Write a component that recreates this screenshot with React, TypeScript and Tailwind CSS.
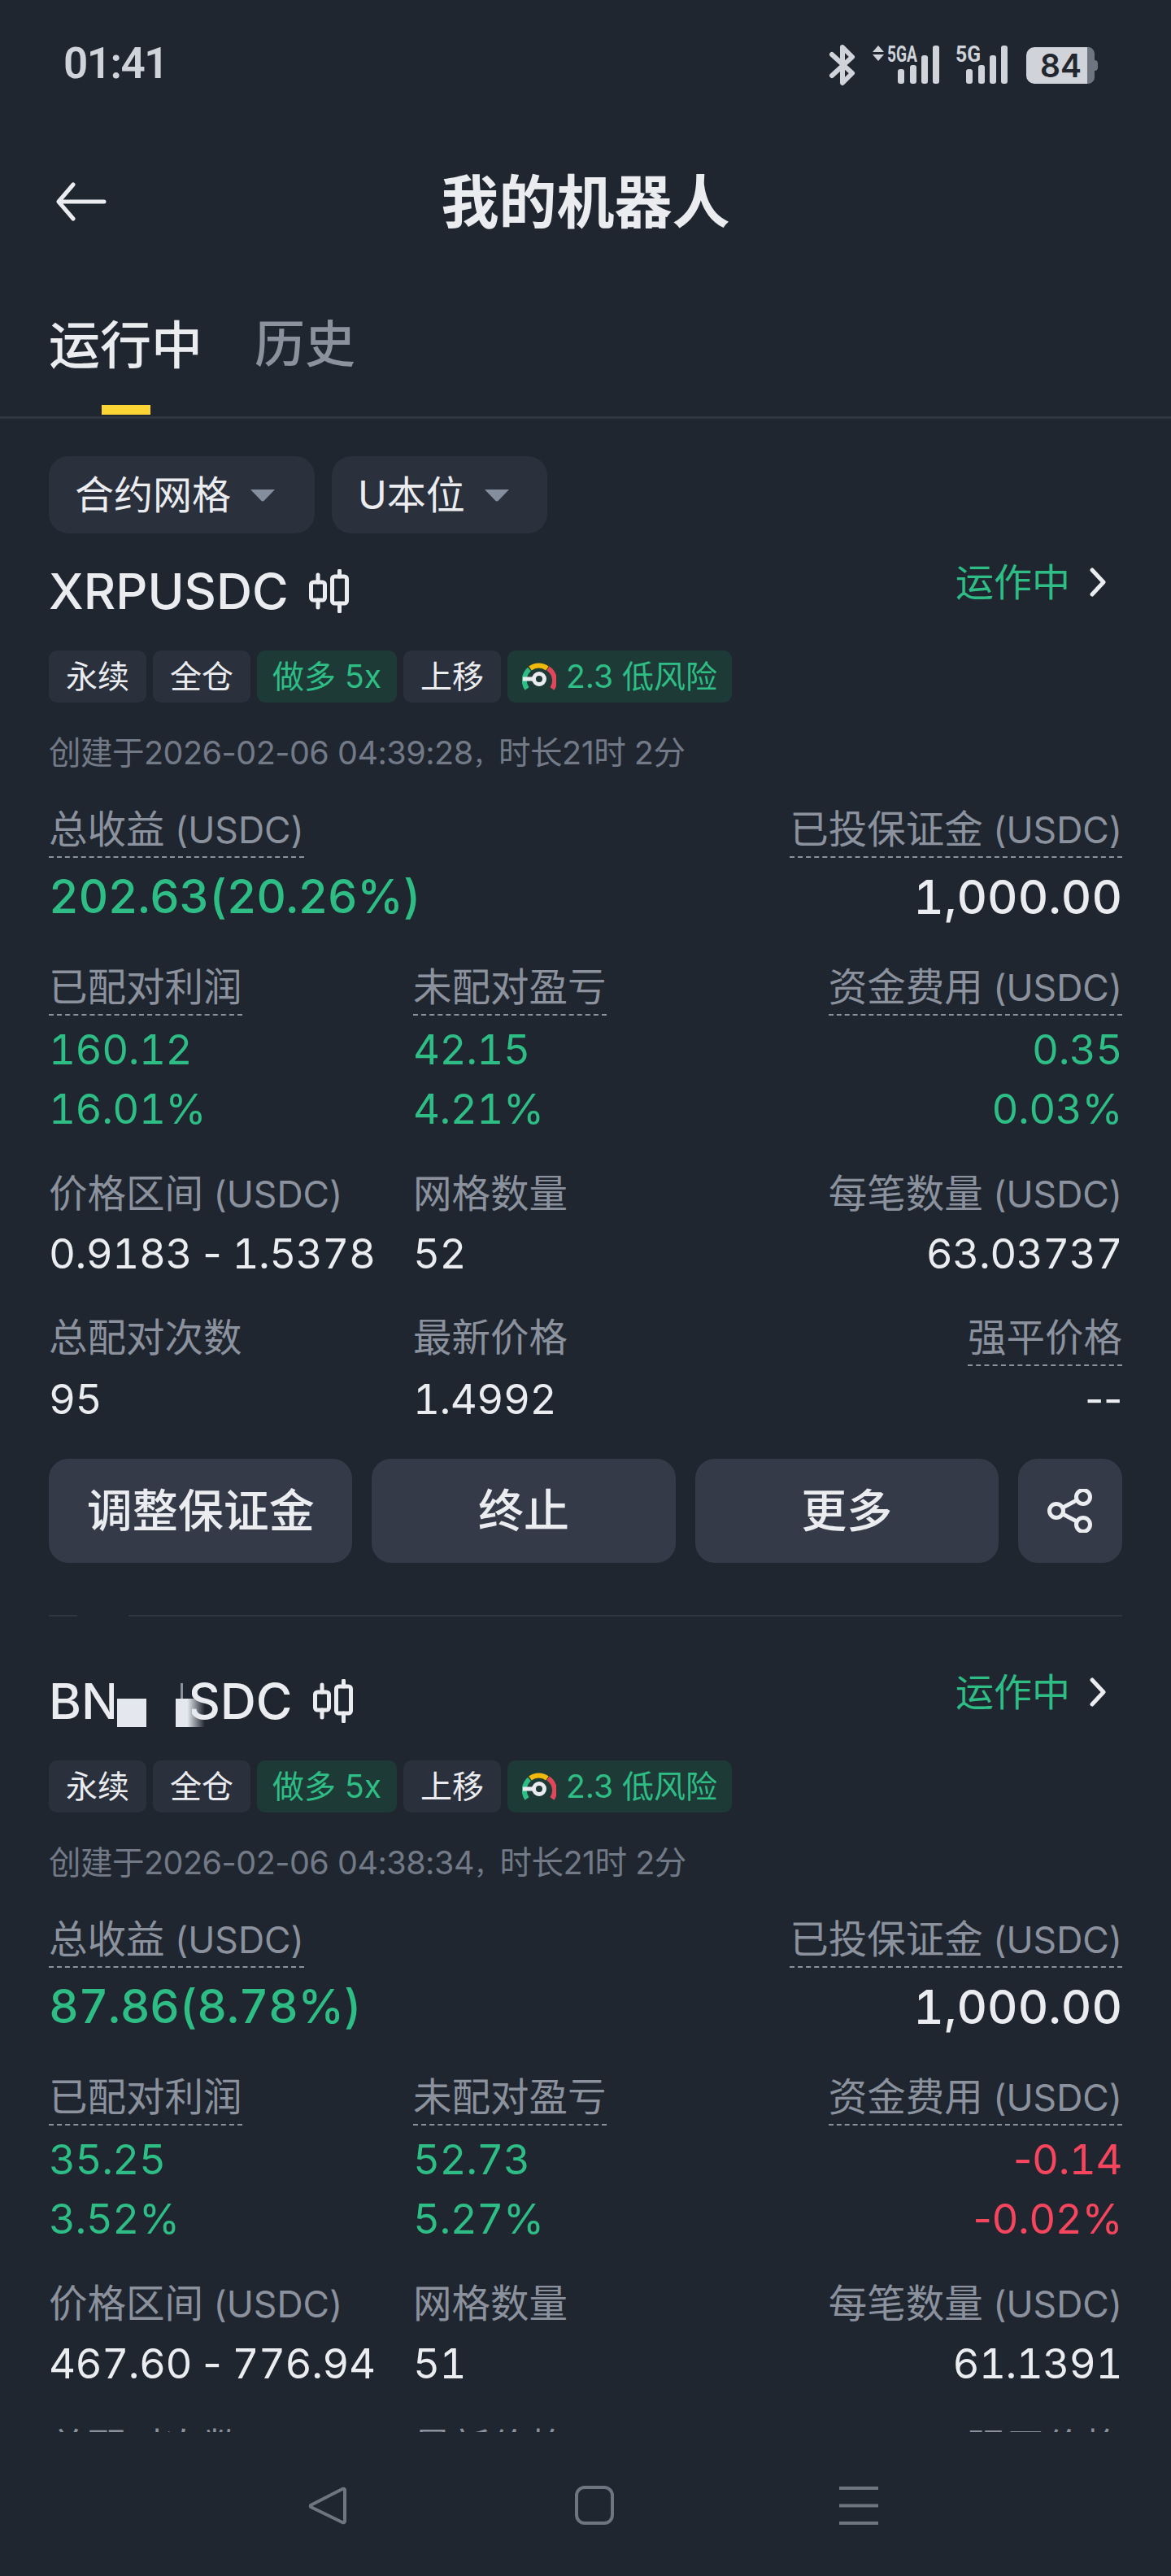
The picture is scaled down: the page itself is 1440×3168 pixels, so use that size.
import React from "react";

const G = "text-[#2ebd85]";
const R = "text-[#f6465d]";
const W = "text-[#eaecef]";

function StatusBar() {
  return (
    <div className="flex h-[150px] shrink-0 items-start justify-between pl-[78px] pr-[85px] pt-[48px]">
      <span className="font-['Roboto','Inter',sans-serif] text-[53px] leading-[60px] font-semibold tracking-[-1.5px] text-[#d0d3d9]">01:41</span>
      <svg width="340" height="60" viewBox="1015 50 340 60" className="mt-[2px]" fill="#d0d3d9">
        <path d="M1023 67 L1048 90 L1036 102 L1036 58 L1048 70 L1023 93" fill="none" stroke="#d0d3d9" strokeWidth="6" strokeLinejoin="round" strokeLinecap="round" />
        <path d="M1080 56 L1087 64 L1073 64 Z M1080 75 L1087 67 L1073 67 Z" />
        <text x="1091" y="76" fontFamily="Roboto" fontSize="28" fontWeight="700" textLength="37" lengthAdjust="spacingAndGlyphs">5GA</text>
        {[[1104, 85], [1119, 80], [1133, 68], [1147, 56]].map(([x, y]) => (
          <rect key={x} x={x} y={y} width="8" height={103 - y} rx="3" />
        ))}
        <text x="1175" y="76" fontFamily="Roboto" fontSize="28" fontWeight="700" textLength="31" lengthAdjust="spacingAndGlyphs">5G</text>
        {[[1188, 85], [1203, 80], [1217, 68], [1231, 56]].map(([x, y]) => (
          <rect key={x} x={x} y={y} width="8" height={103 - y} rx="3" />
        ))}
        <path d="M1337 58 h2 a8 8 0 0 1 7 8 v29 a8 8 0 0 1 -7 8 h-2 Z" fill="#6e7580" />
        <path d="M1346 74 a4 4 0 0 1 4 4 v5 a4 4 0 0 1 -4 4 Z" fill="#6e7580" />
        <path d="M1272 58 H1337 V103 H1272 a10 10 0 0 1 -10 -10 V68 a10 10 0 0 1 10 -10 Z" />
        <text x="1279" y="95" fontFamily="Inter" fontSize="39" fontWeight="600" fill="#22262e">84</text>
      </svg>
    </div>
  );
}

function Header() {
  return (
    <div className="relative flex h-[196px] shrink-0 items-center justify-center">
      <svg width="64" height="50" viewBox="0 0 64 50" className="absolute left-[68px] top-[73px]" fill="none" stroke="#eaecef" strokeWidth="5" strokeLinecap="round" strokeLinejoin="round">
        <path d="M60 25 H5 M22 4 L4 25 L22 46" />
      </svg>
      <span className="text-[71px] leading-[80px] font-semibold text-[#eaecef]">我的机器人</span>
    </div>
  );
}

function Tabs() {
  return (
    <div className="shrink-0 border-b-[3px] border-[#2f3541] pl-[60px]">
      <div className="flex h-[166px] items-start gap-[64px] pt-[42px]">
        <div className="flex flex-col items-center">
          <span className={`text-[63px] leading-[72px] font-medium ${W}`}>运行中</span>
          <span className="mt-[38px] h-[12px] w-[60px] bg-[#fcd535]" />
        </div>
        <span className="text-[62px] leading-[72px] font-medium text-[#8b929e]">历史</span>
      </div>
    </div>
  );
}

function Caret() {
  return (
    <svg width="32" height="16" viewBox="0 0 32 16" fill="#848e9c">
      <path d="M1 1 H31 L18 14.5 a3 3 0 0 1 -4 0 Z" />
    </svg>
  );
}

function Filters() {
  return (
    <div className="mt-[46px] flex gap-[21px]">
      <div className={`flex h-[95px] w-[327px] items-center justify-between rounded-[24px] bg-[#2a303c] pl-[32px] pr-[48px] text-[48px] ${W}`}>
        <span>合约网格</span>
        <Caret />
      </div>
      <div className={`flex h-[95px] w-[265px] items-center justify-between rounded-[24px] bg-[#2a303c] pl-[32px] pr-[46px] text-[48px] ${W}`}>
        <span>U本位</span>
        <Caret />
      </div>
    </div>
  );
}

function Candles() {
  return (
    <svg width="50" height="54" viewBox="0 0 50 54" fill="none" stroke="#eaecef" strokeWidth="5" strokeLinecap="round">
      <rect x="3.5" y="16" width="17" height="22" rx="3" />
      <path d="M12 7 V16 M12 38 V47" />
      <rect x="29.5" y="9" width="18" height="33" rx="3" />
      <path d="M38.5 2 V9 M38.5 42 V52" />
    </svg>
  );
}

function Gauge() {
  return (
    <svg width="42" height="36" viewBox="0 0 42 36" fill="none" strokeWidth="6">
      <path d="M6 33 A 18 18 0 0 1 9 9" stroke="#2ebd85" />
      <path d="M10 8 A 18 18 0 0 1 31 8" stroke="#f0b90b" />
      <path d="M32 8 A 18 18 0 0 1 37 33" stroke="#e0475a" />
      <path d="M1 21 H15" stroke="#eaecef" strokeWidth="5" />
      <circle cx="21" cy="21" r="6.5" stroke="#eaecef" strokeWidth="5" fill="#1f3a37" />
    </svg>
  );
}

function Tag({ children, green, w }: { children: React.ReactNode; green?: boolean; w: string }) {
  return (
    <span className={`flex h-[64px] items-center justify-center rounded-[10px] text-[39px] ${w} ${green ? `bg-[#1d3a37] ${G}` : `bg-[#2a303c] ${W}`}`}>
      {children}
    </span>
  );
}

function Label({ text, dashed, right }: { text: string; dashed?: boolean; right?: boolean }) {
  const cjk = text.replace(" (USDC)", "");
  const unit = text.includes("(USDC)");
  return (
    <div className={`flex h-[56px] ${right ? "justify-end" : ""}`}>
      <span className={`h-[63px] text-[47.5px] leading-[56px] text-[#8b929e] ${dashed ? "border-b-[2px] border-dashed border-[#8b929e]" : ""}`}>
        {cjk}
        {unit ? <span className="text-[44.5px]"> (USDC)</span> : null}
      </span>
    </div>
  );
}

function Num({ s }: { s: string }) {
  return (
    <>
      {s.split(/(-+)/).map((part, i) =>
        part.startsWith("-") ? (
          <span key={i} className="normal-nums">{part}</span>
        ) : (
          <span key={i}>{part}</span>
        ),
      )}
    </>
  );
}

type CardData = {
  title: React.ReactNode;
  date: [string, string];
  total: string;
  paired: [string, string];
  unpaired: [string, string];
  funding: [string, string];
  fundingColor: string;
  range: string;
  grids: string;
  qty: string;
};

function Card({ d }: { d: CardData }) {
  return (
    <div>
      <div className="flex h-[72px] items-start justify-between">
        <div className="flex h-[72px] items-center gap-[24px]">
          <span className={`text-[61px] leading-[72px] font-medium ${W}`}>{d.title}</span>
          <Candles />
        </div>
        <div className={`mr-[20px] flex h-[50px] items-center gap-[24px] text-[47px] ${G}`}>
          <span>运作中</span>
          <svg width="20" height="36" viewBox="0 0 20 36" fill="none" stroke="#eaecef" strokeWidth="5" strokeLinecap="round" strokeLinejoin="round">
            <path d="M3 3 L17 18 L3 33" />
          </svg>
        </div>
      </div>

      <div className="mt-[37px] flex gap-[8px]">
        <Tag w="w-[120px]">永续</Tag>
        <Tag w="w-[120px]">全仓</Tag>
        <Tag w="w-[172px]" green>做多 5x</Tag>
        <Tag w="w-[120px]">上移</Tag>
        <Tag w="w-[276px] gap-[12px]" green>
          <Gauge />
          <span>2.3 低风险</span>
        </Tag>
      </div>

      <div className="mt-[37px] h-[50px] text-[39.5px] leading-[50px] tracking-[-0.5px] text-[#737a87]">
        {d.date[0]}
        <span className="text-[32px]">，</span>
        {d.date[1]}
      </div>

      <div className="mt-[41px] flex justify-between">
        <div>
          <Label dashed text="总收益 (USDC)" />
          <div className={`mt-[20px] text-[57px] leading-[70px] font-medium tracking-[-0.5px] tabular-nums ${G}`}>{d.total}</div>
        </div>
        <div>
          <Label dashed right text="已投保证金 (USDC)" />
          <div className={`mt-[20px] text-right text-[58px] leading-[70px] font-medium tabular-nums ${W}`}>1,000.00</div>
        </div>
      </div>

      <div className="mt-[48px] grid grid-cols-[448px_1fr_auto]">
        <div>
          <div className="flex"><Label dashed text="已配对利润" /></div>
          <Vals v={d.paired} c={G} />
        </div>
        <div>
          <div className="flex"><Label dashed text="未配对盈亏" /></div>
          <Vals v={d.unpaired} c={G} />
        </div>
        <div className="text-right">
          <Label dashed right text="资金费用 (USDC)" />
          <Vals v={d.funding} c={d.fundingColor} />
        </div>
      </div>

      <div className="mt-[40px] grid grid-cols-[448px_1fr_auto]">
        <Cell label="价格区间 (USDC)" value={d.range} gap="mt-[12px]" />
        <Cell label="网格数量" value={d.grids} gap="mt-[12px]" />
        <Cell label="每笔数量 (USDC)" value={d.qty} right gap="mt-[12px]" />
      </div>

      <div className="mt-[41px] grid grid-cols-[448px_1fr_auto]">
        <Cell label="总配对次数" value="95" gap="mt-[14px]" />
        <Cell label="最新价格" value="1.4992" gap="mt-[14px]" />
        <Cell label="强平价格" value="--" right dashed gap="mt-[14px]" />
      </div>

      <div className="mt-[39px] flex gap-[24px]">
        <Btn>调整保证金</Btn>
        <Btn>终止</Btn>
        <Btn>更多</Btn>
        <div className="flex h-[128px] w-[128px] items-center justify-center rounded-[24px] bg-[#343a47]">
          <svg width="58" height="54" viewBox="0 0 58 54" fill="none" stroke="#eaecef" strokeWidth="5">
            <circle cx="12" cy="27" r="8.5" />
            <circle cx="45" cy="10" r="8.5" />
            <circle cx="45" cy="44" r="8.5" />
            <path d="M20 23 L37 14 M20 31 L37 40" />
          </svg>
        </div>
      </div>

      <div className="mt-[64px] flex h-[2px] gap-[63px]">
        <span className="w-[35px] bg-[#2f3541]" />
        <span className="flex-1 bg-[#2f3541]" />
      </div>
    </div>
  );
}

function Vals({ v, c }: { v: [string, string]; c: string }) {
  return (
    <div className={`mt-[12px] text-[51px] leading-[73px] tracking-[-0.5px] tabular-nums ${c}`}>
      <div><Num s={v[0]} /></div>
      <div><Num s={v[1]} /></div>
    </div>
  );
}

function Cell({ label, value, right, dashed, gap }: { label: string; value: string; right?: boolean; dashed?: boolean; gap: string }) {
  return (
    <div className={right ? "text-right" : ""}>
      <Label right={right} dashed={dashed} text={label} />
      <div className={`${gap} text-[51px] leading-[68px] tracking-[-0.5px] tabular-nums ${W}`}><Num s={value} /></div>
    </div>
  );
}

function Btn({ children }: { children: React.ReactNode }) {
  return (
    <div className={`flex h-[128px] flex-1 items-center justify-center rounded-[24px] bg-[#343a47] text-[56px] font-medium ${W}`}>
      {children}
    </div>
  );
}

function Bnb() {
  return (
    <span className="relative inline-block">
      BNBUSDC
      <span className="absolute left-[80px] top-0 h-full w-[96px] bg-[#1f2630]" />
      <span className="absolute left-[84px] top-[33px] h-[35px] w-[36px] bg-[#e4e7ee]" />
      <span className="absolute left-[162px] top-[14px] h-[20px] w-[3px] bg-[#8b929e]" />
      <span className="absolute left-[156px] top-[33px] h-[35px] w-[36px] bg-linear-to-r from-[#e4e7ee] via-[#e4e7ee] via-40% to-transparent" />
    </span>
  );
}

function Nav() {
  return (
    <div className="flex h-[177px] shrink-0 items-start justify-center pt-[66px]">
      <svg width="1440" height="50" viewBox="0 3056 1440 50" fill="none" stroke="#6e7580" strokeWidth="4" strokeLinejoin="round">
        <path d="M421 3060 a2 2 0 0 1 3 1 V3100 a2 2 0 0 1 -3 1 L382 3082 a2 2 0 0 1 0 -2 Z" />
        <rect x="709" y="3058" width="44" height="44" rx="10" />
        <path d="M1032 3059 H1080 M1032 3080.5 H1080 M1032 3102 H1080" strokeWidth="4" />
      </svg>
    </div>
  );
}

const one: CardData = {
  title: "XRPUSDC",
  date: ["创建于2026-02-06 04:39:28", "时长21时 2分"],
  total: "202.63(20.26%)",
  paired: ["160.12", "16.01%"],
  unpaired: ["42.15", "4.21%"],
  funding: ["0.35", "0.03%"],
  fundingColor: G,
  range: "0.9183 - 1.5378",
  grids: "52",
  qty: "63.03737",
};

const two: CardData = {
  title: <Bnb />,
  date: ["创建于2026-02-06 04:38:34", "时长21时 2分"],
  total: "87.86(8.78%)",
  paired: ["35.25", "3.52%"],
  unpaired: ["52.73", "5.27%"],
  funding: ["-0.14", "-0.02%"],
  fundingColor: R,
  range: "467.60 - 776.94",
  grids: "51",
  qty: "61.1391",
};

export default function App() {
  return (
    <div className="flex h-[3168px] w-[1440px] flex-col overflow-hidden bg-[#1f2630] font-['Inter','Noto_Sans_CJK_SC',sans-serif]">
      <StatusBar />
      <Header />
      <Tabs />
      <div className="min-h-0 flex-1 overflow-hidden px-[60px]">
        <Filters />
        <div className="mt-[35px] flex flex-col gap-[68px]">
          <Card d={one} />
          <Card d={two} />
        </div>
      </div>
      <Nav />
    </div>
  );
}
